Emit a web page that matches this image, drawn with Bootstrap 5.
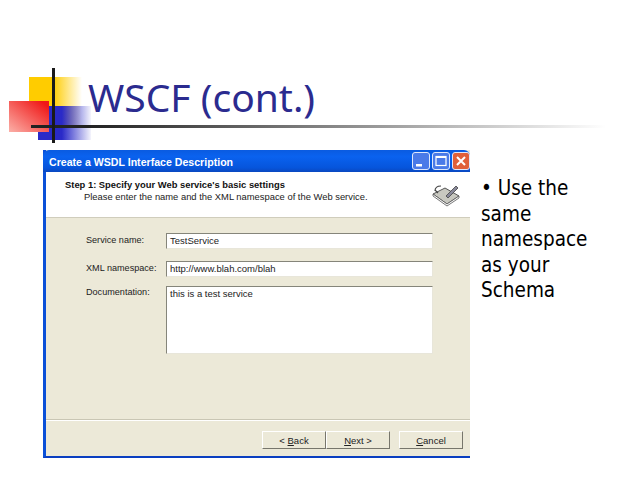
<!DOCTYPE html>
<html lang="en">
<head>
    <meta charset="UTF-8">
    <meta name="viewport" content="width=device-width, initial-scale=1.0">
    <title>WSCF (cont.)</title>
    <link href="https://cdn.jsdelivr.net/npm/bootstrap@5.3.2/dist/css/bootstrap.min.css" rel="stylesheet">
    <style>
        html, body { height: 100%; background: #fff; overflow: hidden; }
        .slide { position: relative; width: 640px; height: 480px; font-family: "DejaVu Sans", sans-serif; }
        .logo-art { position: absolute; left: 0; top: 60px; }
        .slide-head { height: 150px; padding: 69px 0 0 88px; }
        .slide-title { font-family: "Noto Sans", sans-serif; font-size: 39px; line-height: 56px; color: #2b2b8f; margin: 0; font-weight: 400; }
        .slide-main { padding-left: 43px; }
        .wiz { width: 427px; height: 308px; background: #ece9d8; border-left: 3px solid #0a50d8; border-bottom: 2px solid #0a3fc0; font-family: "Liberation Sans", sans-serif; font-size: 9.4px; color: #222; }
        .wiz-title { height: 22px; margin-left: -3px; padding: 0 0 0 6px; border-radius: 6px 6px 0 0; background: linear-gradient(#0a5be0, #0a62ef 30%, #0655dc 80%, #0a48c0); color: #fff; font-weight: 700; font-size: 10.6px; }
        .wiz-caption { padding-top: 3px; }
        .win-btn { width: 18px; height: 18px; border: 1px solid #dfe8fb; border-radius: 3px; background: #4a7ae8; }
        .win-btn + .win-btn { margin-left: 2px; }
        .win-btn.close-x { background: #e0603a; }
        .win-btn svg { display: block; }
        .wiz-top { height: 46px; background: #fff; border-bottom: 1px solid #d0cdbc; padding: 7px 10px 0 19px; }
        .wiz-step { font-weight: 700; color: #111; line-height: 12px; }
        .wiz-sub { padding-left: 19px; line-height: 12px; }
        .wiz-form { padding: 15px 37px 0 40px; }
        .wiz-label { width: 80px; flex: none; font-size: 9.1px; padding-top: 1px; }
        .wiz-field { width: 267px; height: 16px; background: #fff; border: 1px solid #9a9a8e; border-color: #85857a #e8e6da #e8e6da #85857a; padding: 0 3px; font-size: 9.5px; line-height: 14px; }
        .wiz-field.tall { height: 68px; margin-top: 1px; }
        .wiz-foot { margin-top: auto; border-top: 1px solid #c9c6b4; height: 37px; padding: 11px 7px 0 0; box-shadow: inset 0 1px 0 #fff; }
        .wiz-btn { width: 64px; height: 18px; padding: 0; border-radius: 0; background: #ece9d8; border: 1px solid; border-color: #fff #77766c #77766c #fff; color: #222; font-size: 9.5px; line-height: 15px; font-family: "Liberation Sans", sans-serif; }
        .wiz-gap { margin-left: 9px; }
        .bullets { font-size: 20.5px; font-stretch: condensed; line-height: 25.5px; color: #000; padding: 26px 0 0 11px; width: 125px; }
    </style>
</head>
<body>
    <div class="slide">
        <svg class="logo-art" width="640" height="90" viewBox="0 0 640 90">
            <defs>
                <linearGradient id="fadeYellow" x1="0" x2="1" y1="0" y2="0">
                    <stop offset="0.45" stop-color="#ffcc00"/><stop offset="1" stop-color="#ffcc00" stop-opacity="0"/>
                </linearGradient>
                <linearGradient id="fadeRed" x1="1" x2="0" y1="0" y2="1">
                    <stop offset="0.1" stop-color="#f01818"/><stop offset="1" stop-color="#fbb0a8"/>
                </linearGradient>
                <linearGradient id="fadeBlue" x1="0" x2="1" y1="0" y2="0">
                    <stop offset="0.45" stop-color="#2a2ac8"/><stop offset="1" stop-color="#2a2ac8" stop-opacity="0.05"/>
                </linearGradient>
                <linearGradient id="fadeRule" x1="0" x2="1" y1="0" y2="0">
                    <stop offset="0.1" stop-color="#222"/><stop offset="0.6" stop-color="#999"/><stop offset="1" stop-color="#fff"/>
                </linearGradient>
            </defs>
            <rect x="29" y="17" width="53" height="49" fill="url(#fadeYellow)"/>
            <rect x="38" y="46" width="53" height="34" fill="url(#fadeBlue)"/>
            <rect x="9" y="41" width="40" height="31" fill="url(#fadeRed)"/>
            <rect x="31" y="65" width="575" height="3" fill="url(#fadeRule)"/>
            <rect x="52" y="8" width="3" height="75" fill="#1a1a1a"/>
        </svg>

        <div class="slide-head position-relative">
            <h1 class="slide-title">WSCF (cont.)</h1>
        </div>

        <div class="slide-main d-flex">
            <div class="wiz d-flex flex-column">
                <div class="wiz-title d-flex align-items-center justify-content-between">
                    <span class="wiz-caption">Create a WSDL Interface Description</span>
                    <span class="d-flex">
                        <span class="win-btn"><svg width="16" height="16"><rect x="3" y="11" width="6" height="2.5" fill="#fff"/></svg></span>
                        <span class="win-btn"><svg width="16" height="16"><rect x="3" y="3.5" width="10" height="9" fill="none" stroke="#fff" stroke-width="1.2"/><rect x="3" y="3" width="10" height="2" fill="#fff"/></svg></span>
                        <span class="win-btn close-x"><svg width="16" height="16"><path d="M4 4l8 8M12 4l-8 8" stroke="#fff" stroke-width="2"/></svg></span>
                    </span>
                </div>
                <div class="wiz-top d-flex justify-content-between">
                    <div>
                        <div class="wiz-step">Step 1: Specify your Web service's basic settings</div>
                        <div class="wiz-sub">Please enter the name and the XML namespace of the Web service.</div>
                    </div>
                    <svg width="28" height="24" viewBox="0 0 28 24" class="mt-1">
                        <path d="M1 11 L13 5 L27 13 L15 21 Z" fill="#c8c8c0" stroke="#555"/>
                        <path d="M1 11 L1 13 L15 23 L27 15 L27 13 L15 21 Z" fill="#fff" stroke="#555" stroke-width=".8"/>
                        <path d="M3 8 C3 4 6 3 9 3 M6 10 L3 7" stroke="#444" stroke-width="1.2" fill="none"/>
                        <path d="M14 13 L24 3 L26 5 L16 15 Z" fill="#889" stroke="#444" stroke-width=".8"/>
                    </svg>
                </div>
                <div class="wiz-form d-flex flex-column gap-2 flex-grow-1">
                    <div class="d-flex align-items-start"><span class="wiz-label">Service name:</span><div class="wiz-field">TestService</div></div>
                    <div class="d-flex align-items-start mt-1"><span class="wiz-label">XML namespace:</span><div class="wiz-field">http://www.blah.com/blah</div></div>
                    <div class="d-flex align-items-start"><span class="wiz-label">Documentation:</span><div class="wiz-field tall">this is a test service</div></div>
                </div>
                <div class="wiz-foot d-flex justify-content-end">
                    <button class="btn wiz-btn" type="button">&lt; <u>B</u>ack</button>
                    <button class="btn wiz-btn" type="button"><u>N</u>ext &gt;</button>
                    <button class="btn wiz-btn wiz-gap" type="button"><u>C</u>ancel</button>
                </div>
            </div>
            <div class="bullets">&bull; Use the same namespace as your Schema</div>
        </div>
    </div>
</body>
</html>
